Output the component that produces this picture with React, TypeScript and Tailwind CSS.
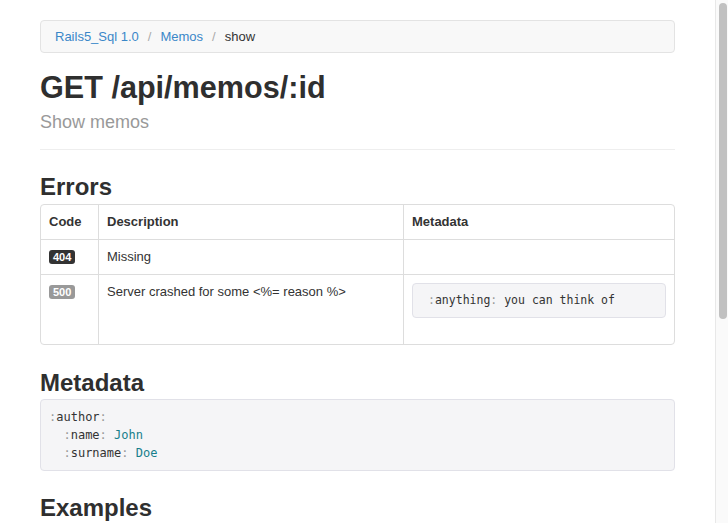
import React from "react";

const sans = "font-['Helvetica_Neue','Liberation_Sans',Arial,sans-serif]";
const mono = "font-['DejaVu_Sans_Mono','Liberation_Mono',monospace]";

function Key({ name }: { name: string }) {
  return (
    <>
      <span className="text-[#999]">:</span>
      <span className="text-[#333]">{name}</span>
      <span className="text-[#999]">:</span>
    </>
  );
}

function Badge({ code, dark }: { code: string; dark?: boolean }) {
  return (
    <span
      className={
        "inline-block rounded-[3px] px-[4px] text-[11px] font-bold leading-[14px] text-white " +
        (dark ? "bg-[#333]" : "bg-[#999]")
      }
    >
      {code}
    </span>
  );
}

export default function App() {
  return (
    <div className={"flex h-[523px] overflow-hidden bg-white text-[#333] " + sans}>
      <main className="flex-1 pl-10">
        <div className="w-[635px] pt-5">
          <nav className="flex h-[33px] items-center rounded-[4px] border border-[#e3e3e3] bg-[#f8f8f8] px-[14px] text-[13px]">
            <a className="text-[#3a87c8]">Rails5_Sql 1.0</a>
            <span className="mx-[9px] text-[#aaa]">/</span>
            <a className="text-[#3a87c8]">Memos</a>
            <span className="mx-[9px] text-[#aaa]">/</span>
            <span className="text-[#333]">show</span>
          </nav>

          <h1 className="mt-[18px] text-[30.6px] font-bold leading-[33px] text-[#2f2f2f]">
            GET /api/memos/:id
          </h1>
          <p className="mt-[8px] text-[18px] leading-[20px] text-[#999]">Show memos</p>
          <hr className="mt-[17px] border-[#eee]" />

          <h2 className="mt-6 text-[24px] font-bold leading-[26px] text-[#2f2f2f]">Errors</h2>
          <div className="mt-1 grid grid-cols-[57px_305px_1fr] overflow-hidden rounded-[4px] border border-[#ddd] text-[13px] leading-[18px]">
            <div className="px-2 py-2 font-bold">Code</div>
            <div className="border-l border-[#ddd] px-2 py-2 font-bold">Description</div>
            <div className="border-l border-[#ddd] px-2 py-2 font-bold">Metadata</div>

            <div className="border-t border-[#ddd] px-2 py-2">
              <Badge code="404" dark />
            </div>
            <div className="border-l border-t border-[#ddd] px-2 py-2">Missing</div>
            <div className="border-l border-t border-[#ddd] px-2 py-2"></div>

            <div className="border-t border-[#ddd] px-2 py-2">
              <Badge code="500" />
            </div>
            <div className="border-l border-t border-[#ddd] px-2 py-2">
              Server crashed for some &lt;%= reason %&gt;
            </div>
            <div className="border-l border-t border-[#ddd] px-2 py-2">
              <pre
                className={
                  "mb-[18px] rounded-[4px] border border-[#e1e1e8] bg-[#f5f5f7] px-[15px] py-2 text-[11.5px] leading-[17px] text-[#333] " +
                  mono
                }
              >
                <Key name="anything" /> you can think of
              </pre>
            </div>
          </div>

          <h2 className="mt-[25px] text-[24px] font-bold leading-[26px] text-[#2f2f2f]">Metadata</h2>
          <pre
            className={
              "mt-[3px] rounded-[4px] border border-[#e1e1e8] bg-[#f5f5f7] px-2 py-2 text-[12px] leading-[18px] " +
              mono
            }
          >
            <Key name="author" />
            {"\n  "}
            <Key name="name" /> <span className="text-[#177f8c]">John</span>
            {"\n  "}
            <Key name="surname" /> <span className="text-[#177f8c]">Doe</span>
          </pre>

          <h2 className="mt-6 text-[24px] font-bold leading-[26px] text-[#2f2f2f]">Examples</h2>
        </div>
      </main>
      <aside className="w-[13px] border-l border-[#e8e8e8] bg-[#fafafa] px-[3px] pt-[3px]">
        <div className="h-[316px] w-2 rounded-full bg-[#c1c1c1]"></div>
      </aside>
    </div>
  );
}
